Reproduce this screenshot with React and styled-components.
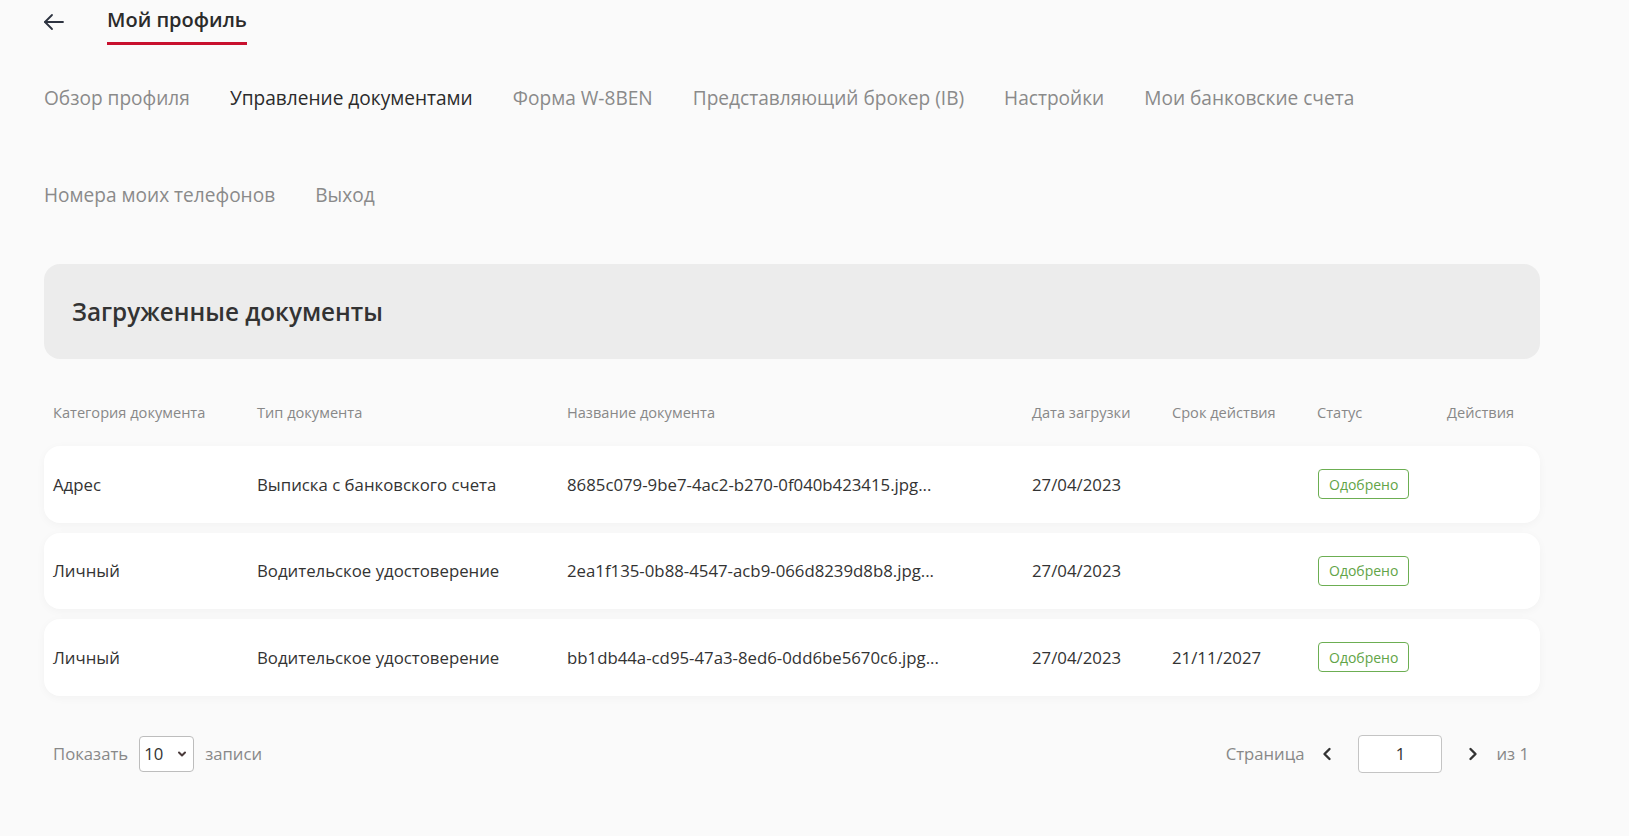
import React from "react";
import styled, { createGlobalStyle } from "styled-components";

const GlobalStyle = createGlobalStyle`
body {
  margin: 0;
  background: #fafafa;
  font-family: "Open Sans", "Noto Sans", sans-serif;
  color: #333;
}
`

const Page = styled.div`
  padding: 6px 89px 40px 44px;
`

const TopBar = styled.div`
  display: flex;
  align-items: flex-start;
  gap: 41px;
`

const BackButton = styled.button`
  border: none;
  background: none;
  padding: 0;
  margin: 4px 0 0 -2px;
  width: 24px;
  height: 24px;
  display: flex;
  align-items: center;
  cursor: pointer;
  color: #2d3340;
`

const PageTitle = styled.h1`
  margin: 0;
  font-size: 20px;
  font-weight: 600;
  line-height: 28px;
  padding-bottom: 8px;
  border-bottom: 3px solid #c8102e;
  color: #2b2b2b;
`

const Tabs = styled.nav`
  display: flex;
  flex-wrap: wrap;
  column-gap: 40px;
  row-gap: 69px;
  margin-top: 39px;
`

const Tab = styled.a`
  font-size: 19.1px;
  line-height: 28px;
  color: ${p => (p.$active ? "#2b2b2b" : "#8a8a8a")};
  cursor: pointer;
`

const SectionHead = styled.div`
  margin-top: 55px;
  height: 95px;
  border-radius: 16px;
  background: #ececec;
  display: flex;
  align-items: center;
  padding: 0 28px;
`

const SectionTitle = styled.h2`
  margin: 0;
  font-size: 24.3px;
  font-weight: 600;
  color: #333;
`

const cols = "204px 310px 465px 140px 145px 130px 1fr"

const HeadRow = styled.div`
  display: grid;
  grid-template-columns: ${cols};
  align-items: center;
  height: 40px;
  margin-top: 33px;
  padding: 0 10px 0 9px;
  font-size: 14.6px;
  color: #888;
`

const Rows = styled.div`
  display: flex;
  flex-direction: column;
  gap: 10px;
  margin-top: 14px;
`

const Row = styled.div`
  display: grid;
  grid-template-columns: ${cols};
  align-items: center;
  height: 76.5px;
  padding: 0 10px 0 9px;
  background: #fff;
  border-radius: 16px;
  box-shadow: 0 2px 10px rgba(0, 0, 0, 0.035);
  font-size: 16.8px;
  color: #333;
`

const Badge = styled.span`
  justify-self: start;
  margin-left: 1px;
  display: inline-flex;
  align-items: center;
  height: 28px;
  padding: 0 10px;
  border: 1px solid #6cae52;
  border-radius: 4px;
  font-size: 14px;
  color: #62a447;
`

const Footer = styled.div`
  display: flex;
  align-items: center;
  justify-content: space-between;
  margin-top: 39px;
  padding: 0 11px 0 9px;
  font-size: 16.7px;
  color: #888;
`

const Group = styled.div`
  display: flex;
  align-items: center;
  gap: ${p => p.$gap || "11px"};
`

const SelectBox = styled.div`
  box-sizing: border-box;
  width: 55px;
  height: 36px;
  border: 1px solid #bdbdbd;
  border-radius: 4px;
  background: #fff;
  display: flex;
  align-items: center;
  justify-content: space-between;
  padding: 0 6px 0 4px;
  color: #333;
`

const PageInput = styled.div`
  box-sizing: border-box;
  width: 84px;
  height: 38px;
  margin: 0 8px;
  border: 1px solid #c4c4c4;
  border-radius: 4px;
  background: #fff;
  display: flex;
  align-items: center;
  justify-content: center;
  color: #333;
`

const Chevron = styled.button`
  border: none;
  background: none;
  padding: 0;
  width: 12px;
  display: flex;
  justify-content: center;
  color: #333;
  cursor: pointer;
`

const docs = [
  { cat: "Адрес", type: "Выписка с банковского счета", name: "8685c079-9be7-4ac2-b270-0f040b423415.jpg...", date: "27/04/2023", exp: "" },
  { cat: "Личный", type: "Водительское удостоверение", name: "2ea1f135-0b88-4547-acb9-066d8239d8b8.jpg...", date: "27/04/2023", exp: "" },
  { cat: "Личный", type: "Водительское удостоверение", name: "bb1db44a-cd95-47a3-8ed6-0dd6be5670c6.jpg...", date: "27/04/2023", exp: "21/11/2027" },
]

const tabs = [
  "Обзор профиля",
  "Управление документами",
  "Форма W-8BEN",
  "Представляющий брокер (IB)",
  "Настройки",
  "Мои банковские счета",
  "Номера моих телефонов",
  "Выход",
]

export default function App() {
  return (
    <Page>
      <GlobalStyle />
      <TopBar>
        <BackButton>
          <svg width="24" height="24" viewBox="0 0 24 24" fill="none" stroke="currentColor" strokeWidth="1.8" strokeLinecap="round" strokeLinejoin="round">
            <path d="M21 12H3" />
            <path d="M10 5l-7 7 7 7" />
          </svg>
        </BackButton>
        <PageTitle>Мой профиль</PageTitle>
      </TopBar>

      <Tabs>
        {tabs.map(t => (
          <Tab key={t} $active={t === "Управление документами"}>{t}</Tab>
        ))}
      </Tabs>

      <SectionHead>
        <SectionTitle>Загруженные документы</SectionTitle>
      </SectionHead>

      <HeadRow>
        <span>Категория документа</span>
        <span>Тип документа</span>
        <span>Название документа</span>
        <span>Дата загрузки</span>
        <span>Срок действия</span>
        <span>Статус</span>
        <span>Действия</span>
      </HeadRow>

      <Rows>
        {docs.map(d => (
          <Row key={d.name}>
            <span>{d.cat}</span>
            <span>{d.type}</span>
            <span>{d.name}</span>
            <span>{d.date}</span>
            <span>{d.exp}</span>
            <Badge>Одобрено</Badge>
            <span />
          </Row>
        ))}
      </Rows>

      <Footer>
        <Group>
          <span>Показать</span>
          <SelectBox>
            <span>10</span>
            <svg width="10" height="8" viewBox="0 0 10 8" fill="none" stroke="#4a3b3b" strokeWidth="2" strokeLinecap="round" strokeLinejoin="round">
              <path d="M2 2.5l3 3 3-3" />
            </svg>
          </SelectBox>
          <span>записи</span>
        </Group>
        <Group $gap="17px">
          <span>Страница</span>
          <Chevron>
            <svg width="10" height="16" viewBox="0 0 10 16" fill="none" stroke="currentColor" strokeWidth="2.4" strokeLinecap="round" strokeLinejoin="round">
              <path d="M7.5 3l-5 5 5 5" />
            </svg>
          </Chevron>
          <PageInput>1</PageInput>
          <Chevron>
            <svg width="10" height="16" viewBox="0 0 10 16" fill="none" stroke="currentColor" strokeWidth="2.4" strokeLinecap="round" strokeLinejoin="round">
              <path d="M2.5 3l5 5-5 5" />
            </svg>
          </Chevron>
          <span>из 1</span>
        </Group>
      </Footer>
    </Page>
  );
}
